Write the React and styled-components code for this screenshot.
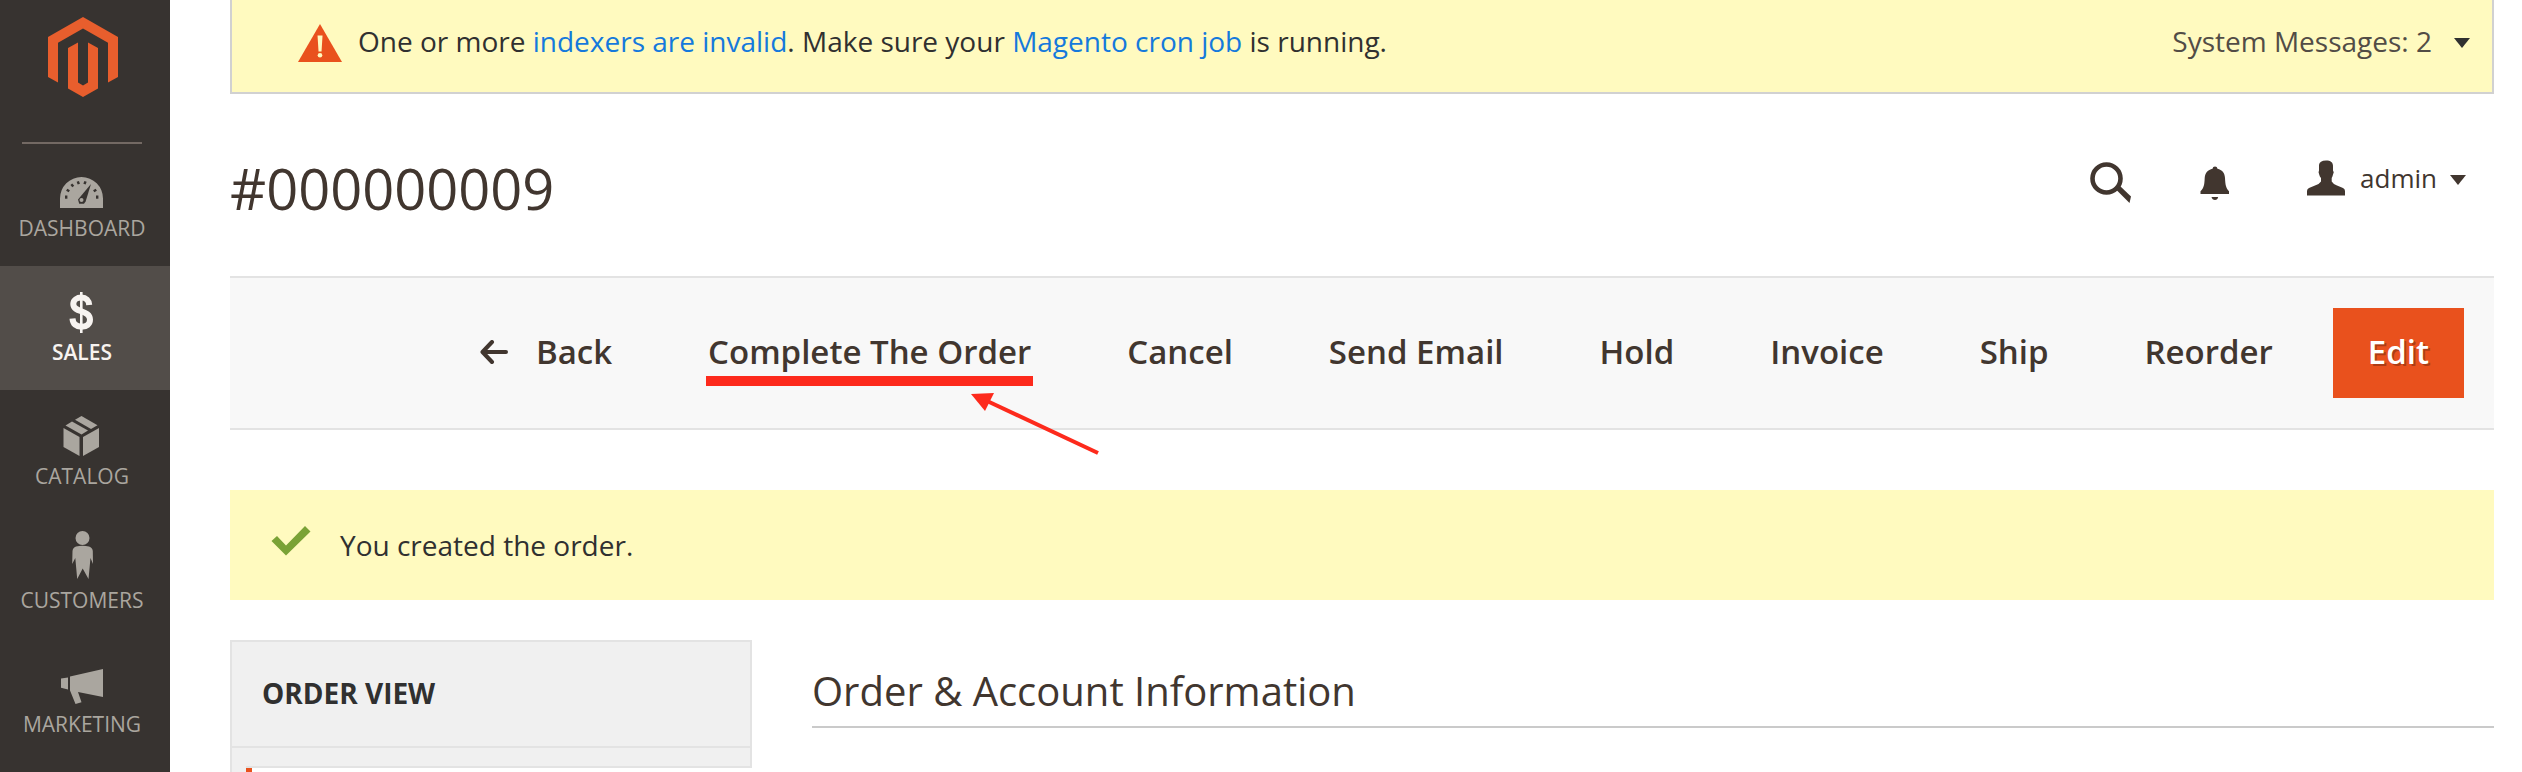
import React from "react";
import styled, { createGlobalStyle, css } from "styled-components";

const GlobalStyle = createGlobalStyle`
  *, *::before, *::after { box-sizing: border-box; }
  body {
    margin: 0;
    background: #fff;
    color: #303030;
    font-family: "Open Sans", "Noto Sans", sans-serif;
    font-size: 28px;
    line-height: 40px;
  }
  button { font: inherit; color: inherit; background: none; border: 0; padding: 0; cursor: pointer; }
  a { text-decoration: none; }
  h1, h2, p { margin: 0; }
  svg { display: block; flex: none; }
`;

const Page = styled.div`
  display: flex;
  min-height: 100vh;
`;

const Sidebar = styled.nav`
  flex: none;
  width: 170px;
  background: #373330;
`;

const LogoLink = styled.a`
  display: block;
  padding: 17px 0 45px 48px;
`;

const Divider = styled.hr`
  width: 120px;
  height: 2px;
  margin: 0 0 -2px 22px;
  border: 0;
  background: #736963;
`;

const MenuItem = styled.a`
  display: flex;
  flex-direction: column;
  align-items: center;
  gap: 2px;
  height: 124px;
  padding: 14px 6px 0 0;
  font-size: 21px;
  line-height: 28px;
  text-transform: uppercase;
  color: ${(p) => (p.$active ? "#f7f3f0" : "#aaa69f")};
  background: ${(p) => (p.$active ? "#524d49" : "transparent")};
  font-weight: ${(p) => (p.$active ? 600 : 400)};
`;

const Main = styled.main`
  flex: 1;
  min-width: 0;
  display: flex;
  flex-direction: column;
  padding: 0 28px 0 60px;
`;

const SystemBar = styled.div`
  display: flex;
  align-items: center;
  height: 94px;
  padding: 0 22px 10px 66px;
  background: #fffabf;
  border: 2px solid #d1d1d1;
  border-top: 0;
`;

const SystemText = styled.p`
  flex: 1;
  margin-left: 16px;
  a { color: #1579dc; }
`;

const SystemToggle = styled.button`
  display: flex;
  align-items: center;
  gap: 22px;
  color: #524c46;
`;

const Caret = styled.span`
  margin-top: 4px;
  border: 8px solid transparent;
  border-top: 10px solid ${(p) => p.$color};
  border-bottom: 0;
`;

const PageHeader = styled.header`
  display: flex;
  justify-content: space-between;
  padding: 54px 28px 48px 0;
`;

const PageTitle = styled.h1`
  font-size: 56px;
  line-height: 80px;
  font-weight: 400;
  color: #41362f;
`;

const HeaderTools = styled.div`
  display: flex;
  align-items: flex-start;
  padding-top: 10px;
  color: #41362f;
`;

const IconButton = styled.button`
  margin-right: ${(p) => p.$space}px;
  padding-top: 4px;
`;

const AccountButton = styled.button`
  display: flex;
  align-items: center;
  gap: 13px;
  font-size: 26px;
  svg { margin-right: 2px; }
`;

const Toolbar = styled.div`
  display: flex;
  justify-content: flex-end;
  padding: 30px 30px 30px 0;
  background: #f8f8f8;
  border: solid #e3e3e3;
  border-width: 2px 0;
`;

const ActionButton = styled.button`
  position: relative;
  display: flex;
  align-items: center;
  gap: 28px;
  height: 90px;
  padding: 0 48px 2px;
  font-size: 33px;
  font-weight: 600;
  color: #41362f;
  white-space: nowrap;
  ${(p) =>
    p.$primary &&
    css`
      margin-left: 12px;
      padding: 0 35px 2px;
      color: #fff;
      background: #e9511d;
      text-shadow: 2px 2px 0 rgba(0, 0, 0, 0.25);
    `}
`;

const Underline = styled.span`
  position: absolute;
  top: 68px;
  left: 46px;
  right: 46px;
  height: 10px;
  background: #fd2a1c;
`;

const Pointer = styled.svg`
  position: absolute;
  top: 84px;
  right: -20px;
`;

const Message = styled.div`
  display: flex;
  align-items: center;
  height: 110px;
  margin-top: 60px;
  padding: 0 40px;
  gap: 28px;
  background: #fffabf;
`;

const Columns = styled.div`
  flex: 1;
  display: flex;
  gap: 60px;
  margin-top: 40px;
`;

const Panel = styled.aside`
  flex: none;
  display: flex;
  flex-direction: column;
  width: 522px;
  border-left: 2px solid #e3e3e3;
  background: linear-gradient(to right, #f0f0f0 14px, transparent 14px);
`;

const PanelTitle = styled.h2`
  padding: 31px 30px 33px;
  border: 2px solid #e3e3e3;
  border-left: 0;
  background: #f0f0f0;
  font-size: 28px;
  line-height: 40px;
  font-weight: 700;
  text-transform: uppercase;
`;

const PanelGap = styled.div`
  height: 18px;
  background: #f0f0f0;
  border-right: 2px solid #e3e3e3;
`;

const PanelTab = styled.div`
  flex: 1;
  min-height: 6px;
  margin-left: 14px;
  background: #fff;
  border-top: 2px solid #e3e3e3;
  box-shadow: inset 6px 0 0 #e9511d;
`;

const Section = styled.section`
  flex: 1;
  min-width: 0;
`;

const SectionTitle = styled.h2`
  padding: 24px 0 8px;
  border-bottom: 2px solid #cacaca;
  font-size: 40px;
  line-height: 54px;
  font-weight: 400;
  color: #41362f;
`;

const Logo = () => (
  <svg width="70" height="80" viewBox="0 0 70 80" fill="#e85e2d" aria-hidden="true">
    <path d="M35 0 70 20V60L60 65.500V25.800L35 11.500 10 25.800V65.500L0 60V20Z" />
    <path d="M20 31 30 25.500V65.500L35 68.500 40 65.500V25.500L50 31V71.500L35 80 20 71.500Z" />
  </svg>
);

const MenuIcon = ({ children }) => (
  <svg width="60" height="56" viewBox="0 0 60 56" fill="currentColor" aria-hidden="true">
    {children}
  </svg>
);

const BG = "#373330";

const DashboardIcon = () => (
  <MenuIcon>
    <path d="M8 52V42.500A21.500 21.500 0 0 1 51 42.500V52Z" />
    <g fill={BG}>
      <rect x="13" y="39.500" width="2.400" height="3.200" />
      <rect x="44" y="39.500" width="2.400" height="3.200" />
      <rect x="-1.500" y="-1.200" width="3" height="2.400" transform="translate(16 34.500) rotate(30)" />
      <rect x="-1.500" y="-1.200" width="3" height="2.400" transform="translate(20.300 29.300) rotate(50)" />
      <rect x="-1.200" y="-1.500" width="2.400" height="3" transform="translate(26.300 26.800) rotate(-20)" />
      <rect x="-1.200" y="-1.500" width="2.400" height="3" transform="translate(33 26.800) rotate(20)" />
      <rect x="-1.500" y="-1.200" width="3" height="2.400" transform="translate(43 34.500) rotate(-30)" />
      <path d="M39 28 33.600 45.500 32 47.800H27.200L26 43.500Z" />
    </g>
    <circle cx="29.500" cy="44" r="2" />
  </MenuIcon>
);

const DollarIcon = () => (
  <MenuIcon>
    <path
      d="M37.200 25C37 20.500 34 17.600 29.500 17.600 25 17.600 21.300 20 21.300 24 21.300 33 38 29.500 38 39.500 38 44 34.500 46.800 29.500 46.800 24.500 46.800 20.800 44 20.500 38.500"
      fill="none"
      stroke="currentColor"
      strokeWidth="6"
    />
    <path d="M28 12h2.600v41H28z" />
  </MenuIcon>
);

const CatalogIcon = () => (
  <MenuIcon>
    <path d="M11.500 24 27.500 33V52L11.500 43Z" />
    <path d="M47 24 31 33V52L47 43Z" />
    <path d="M13.500 21.500 20 17.500 36 26.500 29.500 30.500Z" />
    <path d="M23 15.800 29.500 12 45.500 21.300 39 25Z" />
  </MenuIcon>
);

const CustomersIcon = () => (
  <MenuIcon>
    <circle cx="30.500" cy="10" r="7" />
    <path d="M24 18.500Q30.500 17 37 18.500 40.500 19.500 40.800 23L41 36 38.500 30 36.500 51 30.700 40.500 25.200 51 23.300 30 20.200 36 20.500 23Q20.800 19.500 24 18.500Z" />
  </MenuIcon>
);

const MarketingIcon = () => (
  <MenuIcon>
    <path d="M9 26.500 16 25.500V37.500L9 35.800Z" />
    <path d="M18 24.500 51 17V45L26 40 29.500 50.300 23.500 52 18 38.500Z" />
  </MenuIcon>
);

const WarningIcon = () => (
  <svg width="44" height="42" viewBox="0 -4 44 42" role="img" aria-label="Warning">
    <path d="M22 0 44 38H0Z" fill="#e9511d" />
    <path d="M19.500 11.500h5l-1 16h-3z" fill="#fffabf" />
    <circle cx="22" cy="31.300" r="2.300" fill="#fffabf" />
  </svg>
);

const SearchIcon = () => (
  <svg width="42" height="42" viewBox="0 0 42 42" aria-hidden="true">
    <circle cx="16.500" cy="16.500" r="14" fill="none" stroke="currentColor" strokeWidth="4.600" />
    <path d="M26 27.500 29.500 23.500 41 34.500 39.500 41Z" fill="currentColor" />
  </svg>
);

const BellIcon = () => (
  <svg width="30" height="42" viewBox="0 0 30 42" fill="currentColor" aria-hidden="true">
    <path d="M15 4.500Q17.200 4.500 17.500 6.800C22 7.800 24.800 11 25 16 25.300 22.500 25.800 26 29 29.200V32H.500V29.200C4 26 4.400 22.500 4.700 16 5 11 8 7.800 12.500 6.800Q12.800 4.500 15 4.500Z" />
    <path d="M11.500 35H18.200Q17.500 38 15 38 12.200 38 11.500 35Z" />
  </svg>
);

const UserIcon = () => (
  <svg width="38" height="36" viewBox="0 0 38 36" fill="currentColor" aria-hidden="true">
    <path d="M19 .500C23.500 .500 26.400 2 26 7V10.500Q27.500 12 26 14.500 25.500 16.500 24.700 18V21.500Q26.500 24.500 30 25.500L36 28Q38 29.200 38 31V35.500H0V31Q0 29.200 2 28L8 25.500Q12 24.500 14 21.500V18Q12.700 16.500 12.200 14.500 11 12 12 10.500V5Q12.500 .500 19 .500Z" />
  </svg>
);

const BackIcon = () => (
  <svg width="28" height="24" viewBox="0 0 28 24" fill="none" stroke="currentColor" strokeWidth="4" strokeLinecap="round" strokeLinejoin="round" aria-hidden="true">
    <path d="M12 2 2.500 12 12 22M3 12H26" />
  </svg>
);

const CheckIcon = () => (
  <svg width="42" height="38" viewBox="0 0 42 38" fill="#7aa236" role="img" aria-label="Success">
    <path d="M1.500 15 7 10 16 19.500 35 0 40.500 5.500 16 29.500Z" />
  </svg>
);

const menu = [
  { label: "Dashboard", Icon: DashboardIcon },
  { label: "Sales", Icon: DollarIcon, active: true },
  { label: "Catalog", Icon: CatalogIcon },
  { label: "Customers", Icon: CustomersIcon },
  { label: "Marketing", Icon: MarketingIcon },
];

export default function App() {
  return (
    <>
      <GlobalStyle />
      <Page>
        <Sidebar>
          <LogoLink href="#" aria-label="Magento">
            <Logo />
          </LogoLink>
          <Divider />
          {menu.map(({ label, Icon, active }) => (
            <MenuItem key={label} href="#" $active={active}>
              <Icon />
              <span>{label}</span>
            </MenuItem>
          ))}
        </Sidebar>
        <Main>
          <SystemBar>
            <WarningIcon />
            <SystemText>
              One or more <a href="#">indexers are invalid</a>. Make sure your{" "}
              <a href="#">Magento cron job</a> is running.
            </SystemText>
            <SystemToggle>
              System Messages: 2
              <Caret $color="#303030" />
            </SystemToggle>
          </SystemBar>
          <PageHeader>
            <PageTitle>#000000009</PageTitle>
            <HeaderTools>
              <IconButton $space={68} aria-label="Search">
                <SearchIcon />
              </IconButton>
              <IconButton $space={77} aria-label="Notifications">
                <BellIcon />
              </IconButton>
              <AccountButton>
                <UserIcon />
                admin
                <Caret $color="#41362f" />
              </AccountButton>
            </HeaderTools>
          </PageHeader>
          <Toolbar>
            <ActionButton>
              <BackIcon />
              Back
            </ActionButton>
            <ActionButton>
              Complete The Order
              <Underline />
              <Pointer width="130" height="64" viewBox="0 0 130 64" aria-hidden="true">
                <path d="M16 8 129 61" stroke="#fd2a1c" strokeWidth="4" />
                <path d="M2 2 25 1 16 19Z" fill="#fd2a1c" />
              </Pointer>
            </ActionButton>
            <ActionButton>Cancel</ActionButton>
            <ActionButton>Send Email</ActionButton>
            <ActionButton>Hold</ActionButton>
            <ActionButton>Invoice</ActionButton>
            <ActionButton>Ship</ActionButton>
            <ActionButton>Reorder</ActionButton>
            <ActionButton $primary>Edit</ActionButton>
          </Toolbar>
          <Message role="status">
            <CheckIcon />
            <p>You created the order.</p>
          </Message>
          <Columns>
            <Panel>
              <PanelTitle>Order View</PanelTitle>
              <PanelGap />
              <PanelTab />
            </Panel>
            <Section>
              <SectionTitle>Order &amp; Account Information</SectionTitle>
            </Section>
          </Columns>
        </Main>
      </Page>
    </>
  );
}
